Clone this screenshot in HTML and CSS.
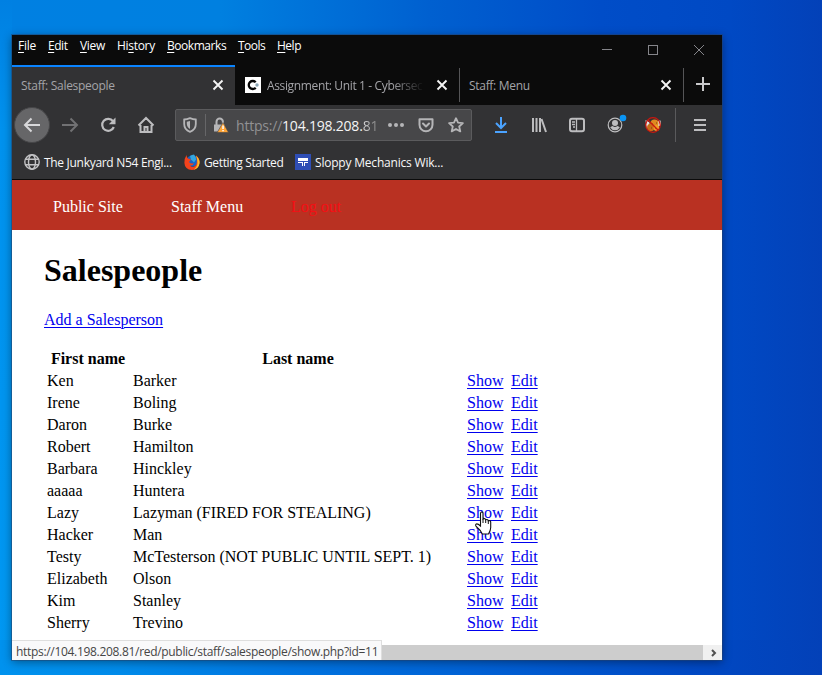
FILE: index.html
```html
<!DOCTYPE html>
<html lang="en">
<head>
<meta charset="utf-8">
<title>Staff: Salespeople</title>
<link rel="stylesheet" href="styles.css">
</head>
<body>
<div class="window">
  <div class="menubar">
    <span class="m-file"><u>F</u>ile</span><span class="m-edit"><u>E</u>dit</span><span class="m-view"><u>V</u>iew</span><span class="m-history">Hi<u>s</u>tory</span><span class="m-book"><u>B</u>ookmarks</span><span class="m-tools"><u>T</u>ools</span><span class="m-help"><u>H</u>elp</span>
    <svg class="controls" width="110" height="30" viewBox="0 0 110 30" fill="none" stroke="#85858a" shape-rendering="crispEdges"><path d="M2 14.500h10M48.500 10.500h9v9h-9z"/><path shape-rendering="auto" d="M94 10l10 10M104 10L94 20"/></svg>
  </div>
  <div class="tabs">
    <div class="tab active"><span class="title t1">Staff: Salespeople</span><svg class="x" width="12" height="12" viewBox="0 0 12 12"><path d="M1.500 1.500l9 9M10.500 1.500l-9 9"/></svg></div>
    <div class="tab second"><svg class="fav" width="16" height="16" viewBox="0 0 16 16"><path fill="#fff" d="M0 0h16v16H0z"/><path d="M10.700 5.300A4 4 0 1 0 10.700 10.700" fill="none" stroke="#050505" stroke-width="2.300"/><circle cx="12" cy="8" r="1.700" fill="#8ba6b5"/></svg><span class="title fade"><span class="t2">Assignment: Unit 1 - Cybersec</span></span><svg class="x" width="12" height="12" viewBox="0 0 12 12"><path d="M1.500 1.500l9 9M10.500 1.500l-9 9"/></svg></div>
    <div class="tab third"><span class="title t3">Staff: Menu</span><svg class="x" width="12" height="12" viewBox="0 0 12 12"><path d="M1.500 1.500l9 9M10.500 1.500l-9 9"/></svg></div>
    <div class="new"><svg width="14" height="14" viewBox="0 0 14 14"><path d="M7 0v14M0 7h14" stroke="#c9c9cb" stroke-width="2"/></svg></div>
  </div>
  <div class="toolbar">
    <div class="tool back"><svg width="18" height="18" viewBox="0 0 18 18"><path d="M17 9H2M8.500 2.500L2 9l6.500 6.500"/></svg></div>
    <div class="tool dim"><svg width="18" height="18" viewBox="0 0 18 18"><path d="M1 9h15M9.500 2.500L16 9l-6.500 6.500"/></svg></div>
    <div class="tool"><svg width="18" height="18" viewBox="0 0 18 18"><path d="M14 5.200A6 6 0 1 0 14.800 11" stroke-width="2.200"/><path d="M16.500 1.500v6.700H9.800z" fill="#bdbdbf" stroke="none"/></svg></div>
    <div class="tool"><svg width="18" height="18" viewBox="0 0 18 18"><path d="M1.500 9.500L9 2l7.500 7.500M3.500 9v7h11V9M7.500 16v-5h3v5"/></svg></div>
    <div class="urlbar">
      <svg class="shield" width="14" height="16" viewBox="0 0 14 16"><path d="M1.200 2.500Q4 2.400 7 1.200 10 2.400 12.800 2.500V7c0 3.800-2.500 6.700-5.800 7.800C3.700 13.700 1.200 10.800 1.200 7z" fill="none" stroke="#b5b5b7" stroke-width="1.800"/><path d="M7 4v8c-2-1-3.200-3-3.200-5.200V4.800z" fill="#b5b5b7"/></svg>
      <i></i>
      <svg class="lock" width="16" height="17" viewBox="0 0 16 17"><path d="M3.500 8V4.800a3.200 3.200 0 0 1 6.400 0V7" fill="none" stroke="#b5b5b7" stroke-width="2"/><path fill="#b5b5b7" d="M1 7.500h10.500v7H1z"/><path d="M10 5.500L4.200 15.500h11.300z" fill="#ffa436" stroke="#474749" stroke-width=".6"/><path d="M9.300 8.500h1.500v3.500H9.300zM9.300 13h1.500v1.300H9.300z" fill="#fff"/></svg>
      <span class="url"><b>https://</b>104.198.208.<em>81</em></span>
      <svg width="16" height="4" viewBox="0 0 16 4" fill="#b5b5b7"><circle cx="2" cy="2" r="2"/><circle cx="8" cy="2" r="2"/><circle cx="14" cy="2" r="2"/></svg>
      <svg class="pocket" width="16" height="15" viewBox="0 0 16 15" fill="none" stroke="#b5b5b7" stroke-width="2" stroke-linecap="round" stroke-linejoin="round"><path d="M1.500 1.300h13v5.500a6.500 6.500 0 0 1-13 0z"/><path d="M5 5.500l3 3 3-3"/></svg>
      <svg class="star" width="16" height="16" viewBox="0 0 16 16" fill="none" stroke="#b5b5b7" stroke-width="1.800" stroke-linejoin="round"><path d="M8 1.200l2 4.500 4.900.5-3.700 3.300 1.100 4.900L8 12l-4.300 2.400 1.100-4.900L1.100 6.200 6 5.700z"/></svg>
    </div>
    <div class="tool first-ext"><svg width="16" height="16" viewBox="0 0 16 16"><path d="M8 0v10.500M3 6l5 5 5-5M2 15h12" stroke="#4ba3ff" style="stroke:#4ba3ff"/></svg></div>
    <div class="tool"><svg width="16" height="16" viewBox="0 0 16 16"><path d="M2 1v14M5.500 1v14M9 1v14M10.500 2l4.500 13" /></svg></div>
    <div class="tool"><svg width="16" height="16" viewBox="0 0 16 16"><rect x="1" y="1.800" width="14" height="12.400" rx="2"/><path d="M7.500 2v12M3 5h3M3 7.500h3M4 10h2" stroke-width="1.300"/></svg></div>
    <div class="tool"><svg width="24" height="24" viewBox="0 0 24 24"><circle cx="12" cy="12" r="6.800" stroke-width="1.200"/><circle cx="12" cy="10" r="3" fill="#bdbdbf" stroke="none"/><path d="M7.200 14.500q1 -1.500 2.500-1.500 2.300 1.800 4.600 0 1.500 0 2.500 1.500-1.800 2.800-4.800 2.800t-4.800-2.800z" fill="#bdbdbf" stroke="none"/><circle cx="20" cy="5" r="3.300" fill="#0a95f5" stroke="none"/></svg></div>
    <div class="tool"><svg width="18" height="18" viewBox="0 0 18 18"><path d="M1.500 4l4 2.500v4l-3 2zM16.500 4.500l-3.500.5 1 6 3-2z" fill="#e8e4dc" stroke="none"/><circle cx="10.500" cy="7.500" r="4" fill="#df8b20" stroke="none"/><circle cx="6.800" cy="11.500" r="3.800" fill="#c96d18" stroke="none"/><circle cx="12.500" cy="12" r="3" fill="#ef9d28" stroke="none"/><path d="M8 8h1M12 7h1M7 12h1M11 12h1" stroke="#7e3910" stroke-width="1"/><circle cx="9" cy="9" r="7.300" stroke="#cc160e" stroke-width="1.200"/><path d="M4 4l10 10" stroke="#cc160e" stroke-width="1.300"/></svg></div>
    <div class="ham"><svg width="12" height="12" viewBox="0 0 12 12"><path d="M0 1h12M0 6h12M0 11h12"/></svg></div>
  </div>
  <div class="bookmarks">
    <svg width="16" height="16" viewBox="0 0 16 16" fill="none" stroke="#c3c3c5" stroke-width="1.400"><circle cx="8" cy="8" r="7.200"/><ellipse cx="8" cy="8" rx="3.500" ry="7.200"/><path d="M1.500 5.300h13M1.500 10.700h13"/></svg><span class="b1">The Junkyard N54 Engi...</span>
    <svg class="fox" width="16" height="16" viewBox="0 0 16 16"><circle cx="8.300" cy="7" r="5.800" fill="#1764c7"/><path d="M6 2q2-1.500 4-1.500 2 2 2 5l-2 3-3-3z" fill="#34a7df"/><path d="M2.500 1Q2.500 3 4 4.500L7 5.500 5 8Q7 10.500 10 9 9 12 5.800 11.500 8 14 11 12 13.500 10 12.800 5L12 1.500Q16 4 15.500 9 14.500 15.600 8 16 .8 15.500.4 9 .4 4 2.500 1z" fill="#f3421c"/><path d="M12 1.500q4 4 3.500 8Q14.500 15 9.500 15.700q4-3 4-7Q13.500 5 12 1.500z" fill="#ffbd27"/></svg><span class="b2">Getting Started</span>
    <svg class="wiki" width="16" height="16" viewBox="0 0 16 16" shape-rendering="crispEdges"><path fill="#2f4eb5" d="M0 0h16v16H0z"/><path fill="#fff" d="M3 4h10v3H3zM3 8h5v4H3zM9 8h4v4H9z"/><path fill="#2f4eb5" d="M3 9h4v3H3zM10 9h3v3h-3z"/></svg><span class="b3">Sloppy Mechanics Wik...</span>
  </div>
  <nav><a class="n1">Public Site</a><a class="n2">Staff Menu</a><a class="logout">Log out</a></nav>
  <main>
    <h1>Salespeople</h1>
    <a class="add link">Add a Salesperson</a>
    <table>
      <tr><th>First name</th><th>Last name</th><th></th><th></th></tr>
      <tr><td>Ken</td><td>Barker</td><td><a class="link">Show</a></td><td><a class="link">Edit</a></td></tr>
      <tr><td>Irene</td><td>Boling</td><td><a class="link">Show</a></td><td><a class="link">Edit</a></td></tr>
      <tr><td>Daron</td><td>Burke</td><td><a class="link">Show</a></td><td><a class="link">Edit</a></td></tr>
      <tr><td>Robert</td><td>Hamilton</td><td><a class="link">Show</a></td><td><a class="link">Edit</a></td></tr>
      <tr><td>Barbara</td><td>Hinckley</td><td><a class="link">Show</a></td><td><a class="link">Edit</a></td></tr>
      <tr><td>aaaaa</td><td>Huntera</td><td><a class="link">Show</a></td><td><a class="link">Edit</a></td></tr>
      <tr><td>Lazy</td><td>Lazyman (FIRED FOR STEALING)</td><td><a class="link">Show</a></td><td><a class="link">Edit</a></td></tr>
      <tr><td>Hacker</td><td>Man</td><td><a class="link">Show</a></td><td><a class="link">Edit</a></td></tr>
      <tr><td>Testy</td><td>McTesterson (NOT PUBLIC UNTIL SEPT. 1)</td><td><a class="link">Show</a></td><td><a class="link">Edit</a></td></tr>
      <tr><td>Elizabeth</td><td>Olson</td><td><a class="link">Show</a></td><td><a class="link">Edit</a></td></tr>
      <tr><td>Kim</td><td>Stanley</td><td><a class="link">Show</a></td><td><a class="link">Edit</a></td></tr>
      <tr><td>Sherry</td><td>Trevino</td><td><a class="link">Show</a></td><td><a class="link">Edit</a></td></tr>
    </table>
  </main>
  <div class="scrollbar"><div class="arrow"><svg width="8" height="8" viewBox="0 0 8 8"><path d="M1 1l3 3-3 3" fill="none" stroke="#505050" stroke-width="2"/></svg></div></div>
  <div class="status"><span>https://104.198.208.81/red/public/staff/salespeople/show.php?id=11</span></div>
</div>
<svg class="cursor" width="18" height="24" viewBox="0 0 18 24"><path d="M6.500 14V2.500q0-1.500 1.300-1.500T9 2.500V8q2.500-1 2.700.8Q14 8 14.300 9.800q2.400-.6 2.400 1.200v5.500q0 3-2.200 6.500H8.300Q6.500 19 2.200 15.500 1 14 2.300 13q1.500-.5 4.200 2z" fill="#fff" stroke="#111" stroke-width="1.100"/><path d="M9 8v4M11.700 8.800V12M14.300 9.800V13" stroke="#111"/></svg>
</body>
</html>
```

FILE: styles.css
```css
* { box-sizing: border-box; }
body {
  margin: 0; width: 822px; height: 675px; overflow: hidden; padding: 35px 0 0 12px;
  font: 12px/16px "Open Sans", "Noto Sans", sans-serif;
  background:
    linear-gradient(90deg, #0092ee, #008bea 120px, #0074e0 290px, #0060d4 480px, #0049c4 690px, #0341b8) 0 640px / 100% 35px no-repeat,
    linear-gradient(#0080e2, #0092ee 130px, #0098f2) 0 0 / 12px 100% no-repeat,
    linear-gradient(90deg, #0080e2 0, #0080e0 220px, #0060d0 430px, #004dc8 600px, #0049c4 730px, #0341b8 822px);
}
svg { display: block; flex: none; }
.window { position: relative; width: 710px; height: 625px; display: flex; flex-direction: column; background: #fff; box-shadow: 0 0 0 1px rgba(35,65,110,.5), 0 2px 9px rgba(0,0,0,.42); }
.menubar { height: 30px; background: #0b0b0b; color: #fff; display: flex; gap: 12px; padding: 3px 6px; white-space: nowrap; }
.menubar u { text-underline-offset: 2px; }
.m-file { width: 18px; letter-spacing: -.25px; }
.m-edit { width: 20px; letter-spacing: -.45px; }
.m-view { width: 25px; letter-spacing: -.35px; }
.m-history { width: 38px; letter-spacing: -.3px; }
.m-book { width: 59px; letter-spacing: -.45px; }
.m-tools { width: 27px; letter-spacing: -.55px; }
.m-help { width: 26px; letter-spacing: -.5px; }
.controls { margin: -3px 6px 0 auto; }
.tabs { height: 40px; background: #0b0b0b; display: flex; color: #a4a4a8; }
.tab { width: 224px; display: flex; align-items: center; justify-content: space-between; padding: 0 11px 0 9px; }
.active { width: 223px; background: #323234; border-top: 2px solid #0a84ff; padding-bottom: 2px; }
.second { padding-left: 10px; justify-content: flex-start; }
.third { width: 225px; border: solid #4c4c4e; border-width: 0 1px; border-image: linear-gradient(transparent 4px, #555557 4px, #555557 36px, transparent 36px) 1; }
.title { white-space: nowrap; letter-spacing: -.3px; margin-top: 1px; }
.fade { width: 160px; margin-left: 6px; margin-right: auto; mask-image: linear-gradient(90deg, #000 125px, transparent 157px); letter-spacing: -.36px; }
.x path { stroke: #f4f4f4; stroke-width: 1.900; }
.new { width: 38px; display: flex; align-items: center; justify-content: center; padding-bottom: 2px; }
.toolbar { height: 40px; background: #323234; display: flex; align-items: center; padding-left: 1px; }
.tool { width: 38px; height: 38px; display: flex; align-items: center; justify-content: center; flex: none; }
.tool svg, .ham svg { fill: none; stroke: #bdbdbf; stroke-width: 2; }
.back { width: 36px; height: 36px; margin: 0 1px; border-radius: 50%; background: #666668; border: 1px solid #464648; }
.back svg { stroke: #d8d8da; }
.dim svg { stroke: #717173; }
.urlbar { width: 297px; height: 32px; margin-left: 10px; background: #474749; border: 1px solid #5b5b5d; border-radius: 2px; display: flex; align-items: center; padding-left: 7px; }
.urlbar i { width: 1px; height: 22px; background: #666668; margin: 0 7px 0 8px; }
.url { font-size: 14px; line-height: 20px; color: #f5f5f5; width: 141px; margin: 1px 11px 0 7px; white-space: nowrap; letter-spacing: -.21px; }
.url b { color: #919193; font-weight: 400; }
.url em { font-style: normal; background: linear-gradient(90deg, #ddd, #777); background-clip: text; color: transparent; }
.pocket { margin-left: 14px; }
.star { margin-left: 14px; }
.first-ext { margin-left: 10px; }
.ham { width: 46px; height: 34px; border-left: 1px solid #5a5a5c; margin-left: 3px; display: flex; align-items: center; padding-left: 18px; }
.bookmarks { height: 35px; background: #323234; border-bottom: 1px solid #0b0b0b; display: flex; align-items: center; padding-left: 12px; color: #f8f8f8; white-space: nowrap; }
.bookmarks span { margin-left: 4px; padding-top: 1px; }
.b1 { width: 128px; letter-spacing: -.3px; }
.b2 { width: 79px; letter-spacing: -.36px; }
.b3 { width: 129px; letter-spacing: -.2px; }
.fox, .wiki { margin-left: 12px; }
nav { height: 50px; background: #b93122; color: #fff; font: 16px/18px "Liberation Serif", serif; display: flex; padding: 18px 41px; }
.n1 { width: 118px; }
.n2 { width: 120px; }
.logout { color: #f50e14; }
main { flex: 1; padding: 22px 32px 0; font: 16px/18px "Liberation Serif", serif; color: #000; }
h1 { font-size: 32px; line-height: 37px; margin: 0 0 22px; }
.link { color: #0000ee; text-decoration: underline 1px; text-underline-offset: 2px; }
.add { display: block; width: max-content; }
table { border-spacing: 2px; margin-top: 18px; table-layout: fixed; width: 500px; }
th, td { padding: 1px; height: 20px; text-align: left; }
th { text-align: center; }
th:nth-child(1) { width: 84px; }
th:nth-child(2) { width: 332px; }
th:nth-child(3) { width: 42px; }
.scrollbar { height: 15px; background: #cdcdcd; display: flex; justify-content: flex-end; }
.arrow { width: 19px; background: #f0f0f0; display: flex; align-items: center; padding-left: 8px; }
.status { position: absolute; left: 0; bottom: 0; width: 370px; height: 20px; background: #f9f9fa; border: solid #dedede; border-width: 1px 1px 0 0; color: #454545; padding: 3px 4px 0; white-space: nowrap; letter-spacing: -.31px; }
.cursor { position: absolute; left: 474px; top: 511px; }
```
